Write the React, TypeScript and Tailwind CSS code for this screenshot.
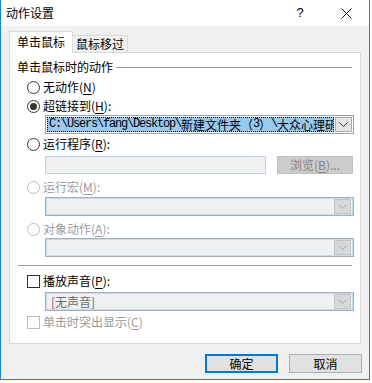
import type { ReactNode } from "react";

const cjk = "font-['Noto_Sans_CJK_SC',sans-serif]";
const mono = "font-['Liberation_Mono',monospace]";

function Mn({ k }: { k: string }) {
  return (
    <>
      (<span className="underline underline-offset-2">{k}</span>)
    </>
  );
}

function Chevron({ color }: { color: string }) {
  return (
    <svg width="9" height="5" viewBox="0 0 9 5">
      <path d="M0.5 0.5 L4.5 4.5 L8.5 0.5" fill="none" stroke={color} strokeWidth="1" />
    </svg>
  );
}

function Radio({
  children,
  checked,
  disabled,
  className = "",
}: {
  children: ReactNode;
  checked?: boolean;
  disabled?: boolean;
  className?: string;
}) {
  return (
    <div className={`flex items-center h-[16px] pl-[17px] gap-[3px] ${className}`}>
      <div
        className={`w-[13px] h-[13px] rounded-full border bg-white flex items-center justify-center ${
          disabled ? "border-[#bcbcbc]" : "border-[#333333]"
        }`}
      >
        {checked && <div className="w-[7px] h-[7px] rounded-full bg-[#333333]" />}
      </div>
      <span className={`text-[12px] leading-[16px] ${disabled ? "text-[#9a9a9a]" : "text-black"}`}>
        {children}
      </span>
    </div>
  );
}

function Check({
  children,
  disabled,
  className = "",
}: {
  children: ReactNode;
  disabled?: boolean;
  className?: string;
}) {
  return (
    <div className={`flex items-center h-[16px] pl-[17px] gap-[3px] ${className}`}>
      <div
        className={`w-[13px] h-[13px] border bg-white ${
          disabled ? "border-[#bcbcbc]" : "border-[#333333]"
        }`}
      />
      <span className={`text-[12px] leading-[16px] ${disabled ? "text-[#9a9a9a]" : "text-black"}`}>
        {children}
      </span>
    </div>
  );
}

function DisabledCombo({ className = "", text }: { className?: string; text?: string }) {
  return (
    <div
      className={`ml-[35px] w-[309px] h-[19px] border border-[#adadad] shadow-[inset_0_0_0_1px_#c6dcf2] bg-[#f0f0f0] flex items-center pl-[5px] pr-[2px] ${className}`}
    >
      <span className="flex-1 text-[12px] leading-[15px] text-[#6d6d6d]">{text}</span>
      <div className="w-[17px] h-[15px] bg-[#d8d8d8] border border-[#c4c4c4] flex items-center justify-center">
        <Chevron color="#a8a8a8" />
      </div>
    </div>
  );
}

export default function App() {
  return (
    <div className={`w-[372px] h-[383px] bg-white ${cjk}`}>
      <div className="w-[370px] h-[380px] border-x border-b border-[#1883d7] flex flex-col">
        {/* title bar */}
        <div className="h-[26px] bg-white flex items-center">
          <span className="flex-1 pl-[5px] text-[12px] leading-[16px] text-black">动作设置</span>
          <div className="w-[46px] flex justify-center text-[13px] leading-[16px] text-black font-['Liberation_Sans',sans-serif]">
            ?
          </div>
          <div className="w-[46px] flex justify-center">
            <svg width="11" height="11" viewBox="0 0 11 11">
              <path d="M0.5 0.5 L10.5 10.5 M10.5 0.5 L0.5 10.5" stroke="#111" strokeWidth="1" />
            </svg>
          </div>
        </div>

        {/* body */}
        <div className="flex-1 bg-[#f0f0f0] pl-[8px] pr-[7px] flex flex-col">
          {/* tabs */}
          <div className="mt-[5px] h-[21px] flex items-end">
            <div className="relative z-10 w-[64px] h-[22px] -mb-px bg-white border-x border-t border-[#d9d9d9] pl-[7px] pt-[2px] text-[12px] leading-[16px] text-black">
              单击鼠标
            </div>
            <div className="w-[56px] h-[17px] -ml-px bg-[#f0f0f0] border-r border-t border-[#d9d9d9] pl-[4px] text-[12px] leading-[16px] text-black">
              鼠标移过
            </div>
          </div>

          {/* panel */}
          <div className="w-[352px] h-[292px] bg-white border border-[#d9d9d9] flex flex-col">
            <div className="mt-[6px] h-[16px] flex items-center pl-[7px] pr-[8px] gap-[3px]">
              <span className="text-[12px] leading-[16px] text-black">单击鼠标时的动作</span>
              <div className="flex-1 h-px bg-[#a0a0a0]" />
            </div>

            <Radio className="mt-[4px]">
              无动作<Mn k="N" />
            </Radio>
            <Radio className="mt-[3px]" checked>
              超链接到<Mn k="H" />:
            </Radio>

            <div className="mt-[1px] ml-[35px] w-[309px] h-[19px] border border-[#a0a0a0] bg-white flex items-center p-[1px] gap-[1px]">
              <div className="flex-1 h-[15px] bg-[#99c9ef] border border-dotted border-black overflow-hidden whitespace-nowrap flex items-center pl-[1px] text-black">
                <span className={`${mono} text-[12px] tracking-[-1.2px] leading-[13px]`}>
                  {"C:\\Users\\fang\\Desktop\\"}
                </span>
                <span className="text-[12px] leading-[13px]">新建文件夹</span>
                <span className="text-[12px] leading-[13px]">（</span>
                <span className={`${mono} text-[12px] tracking-[-1.2px] leading-[13px]`}>3</span>
                <span className="text-[12px] leading-[13px]">）</span>
                <span className={`${mono} text-[12px] tracking-[-1.2px] leading-[13px]`}>{"\\"}</span>
                <span className="text-[12px] leading-[13px]">大众心理研究</span>
              </div>
              <div className="w-[17px] h-[15px] bg-[#e5e5e5] border border-[#acacac] flex items-center justify-center">
                <Chevron color="#333333" />
              </div>
            </div>

            <Radio className="mt-[2px]">
              运行程序<Mn k="R" />:
            </Radio>
            <div className="mt-[4px] ml-[35px] flex gap-[11px]">
              <div className="w-[221px] h-[18px] bg-[#f0f0f0] border border-[#b9d1ea]" />
              <div className="w-[76px] h-[18px] bg-[#cccccc] border border-[#bfbfbf] flex items-center justify-center text-[12px] leading-[16px] text-[#838383]">
                浏览<Mn k="B" />...
              </div>
            </div>

            <Radio className="mt-[5px]" disabled>
              运行宏<Mn k="M" />:
            </Radio>
            <DisabledCombo className="mt-[2px]" />

            <Radio className="mt-[5px]" disabled>
              对象动作<Mn k="A" />:
            </Radio>
            <DisabledCombo className="mt-[1px]" />

            <div className="mt-[8px] ml-[8px] w-[334px] h-px bg-[#a0a0a0]" />

            <Check className="mt-[7px]">
              播放声音<Mn k="P" />:
            </Check>
            <DisabledCombo className="mt-[3px]" text="[无声音]" />

            <Check className="mt-[3px]" disabled>
              单击时突出显示<Mn k="C" />
            </Check>
          </div>

          {/* buttons */}
          <div className="mt-[10px] flex justify-end gap-[11px]">
            <div className="w-[73px] h-[19px] bg-[#e1e1e1] border-2 border-[#0078d7] flex items-center justify-center text-[12px] leading-[16px] text-black">
              确定
            </div>
            <div className="w-[73px] h-[19px] bg-[#e1e1e1] border border-[#adadad] flex items-center justify-center text-[12px] leading-[16px] text-black">
              取消
            </div>
          </div>
        </div>
      </div>
    </div>
  );
}
